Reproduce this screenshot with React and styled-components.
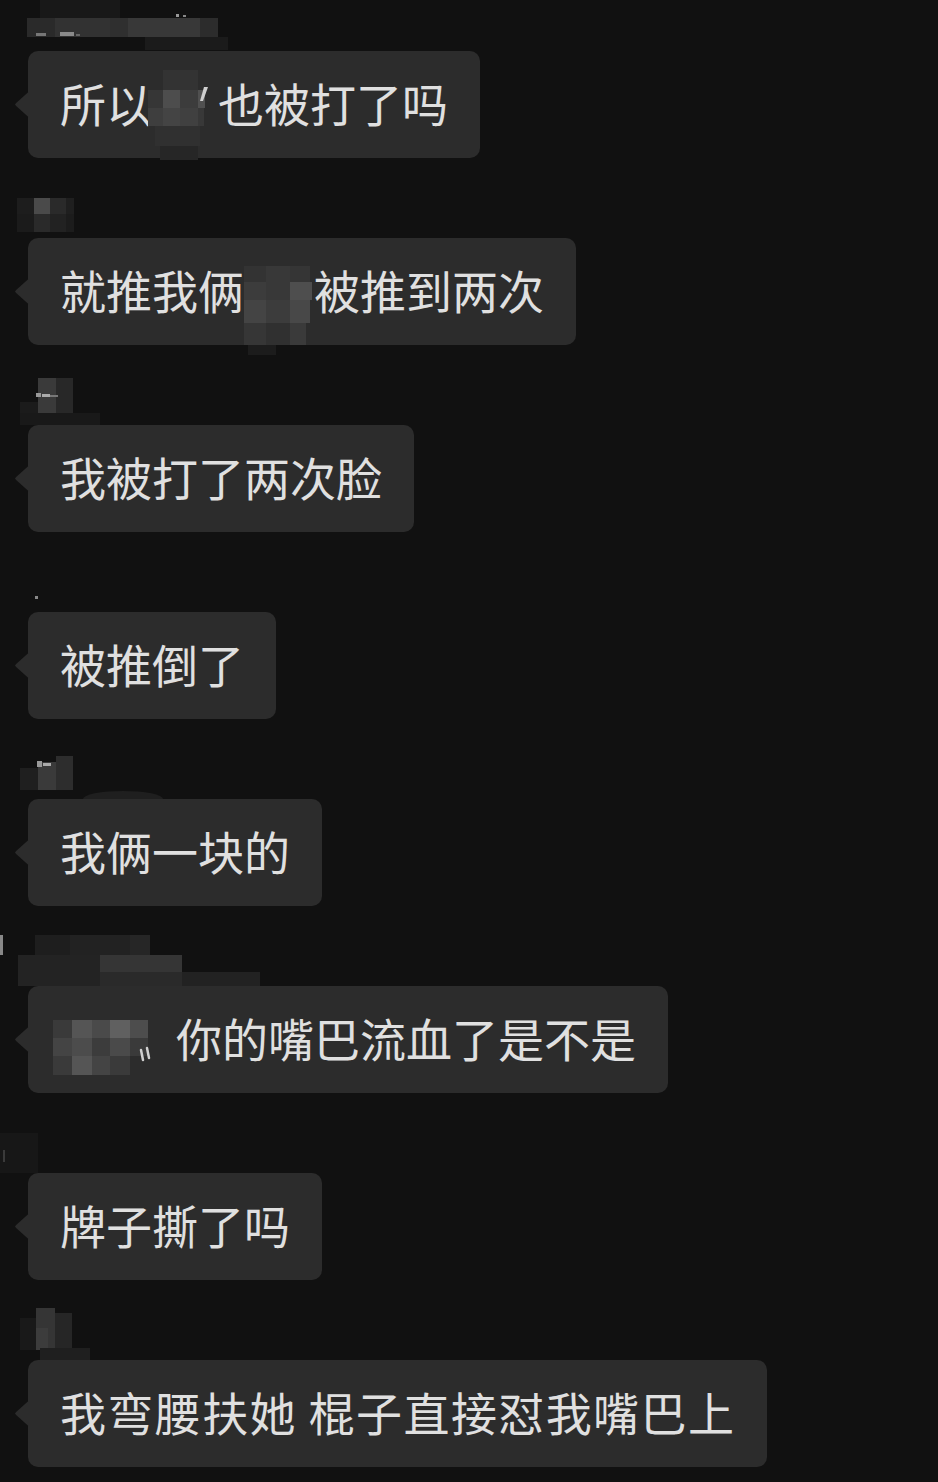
import React from "react";
import styled, { createGlobalStyle } from "styled-components";

const GlobalStyle = createGlobalStyle`
  html, body { margin: 0; padding: 0; background: #111111; }
  body { font-family: "Noto Sans CJK SC", "Noto Sans", sans-serif; }
`;

const Page = styled.div`
  width: 938px;
  min-height: 1482px;
  background: #111111;
  display: flex;
  flex-direction: column;
  padding-left: 28px;
  box-sizing: border-box;
  overflow: hidden;
`;

const Message = styled.div`
  display: flex;
  flex-direction: column;
  align-items: flex-start;
`;

const NameRow = styled.div`
  height: ${(p) => p.$h}px;
  width: 300px;
  margin-left: -28px;
  position: relative;
`;

const MosaicSvg = styled.svg`
  display: block;
  overflow: visible;
`;

const Bubble = styled.div`
  position: relative;
  display: flex;
  align-items: center;
  height: 107px;
  padding: 0 32px 5px;
  box-sizing: border-box;
  background: #2c2c2c;
  border-radius: 10px;
  color: #e0e0e0;
  font-size: 46px;
  line-height: 1;
  white-space: pre;
  letter-spacing: ${(p) => p.$letterSpacing || 0}px;
  word-spacing: ${(p) => p.$wordSpacing || 0}px;

  &::before {
    content: "";
    position: absolute;
    left: -13px;
    top: 50%;
    width: 14px;
    height: 26px;
    margin-top: -13px;
    background: #2c2c2c;
    clip-path: polygon(100% 0, 8% 44%, 0 50%, 8% 56%, 100% 100%);
  }
`;

const Text = styled.span`
  display: block;
`;

const Redacted = styled.span`
  position: relative;
  align-self: stretch;
  flex: none;
  width: ${(p) => p.$w}px;
  margin-left: ${(p) => p.$ml || 0}px;
  margin-bottom: -5px;
  z-index: 1;
`;

const RedactedSvg = styled.svg`
  position: absolute;
  left: 0;
  top: 0;
  overflow: visible;
`;

function Mosaic({ rects, extra, width = 300, height = 80 }) {
  return (
    <MosaicSvg width={width} height={height}>
      {rects.map(([x, y, w, h, c], i) => (
        <rect key={i} x={x} y={y} width={w} height={h} fill={c} />
      ))}
      {extra}
    </MosaicSvg>
  );
}

function InlineMosaic({ w, ml, rects, extra }) {
  return (
    <Redacted $w={w} $ml={ml}>
      <RedactedSvg width={w} height={107}>
        {rects.map(([x, y, rw, h, c], i) => (
          <rect key={i} x={x} y={y} width={rw} height={h} fill={c} />
        ))}
        {extra}
      </RedactedSvg>
    </Redacted>
  );
}

const label1 = [
  [40, 0, 80, 18, "#181818"],
  [27, 18, 28, 19, "#2a2a2a"],
  [55, 18, 55, 19, "#323232"],
  [110, 18, 18, 19, "#2f2f2f"],
  [128, 18, 72, 19, "#383838"],
  [200, 18, 18, 19, "#2c2c2c"],
  [145, 37, 83, 13, "#1b1b1b"],
  [36, 33, 10, 3, "#777777"],
  [60, 32, 14, 4, "#8a8a8a"],
  [76, 34, 4, 2, "#666666"],
  [176, 14, 3, 3, "#999999"],
  [183, 15, 3, 2, "#888888"],
];
const label2 = [
  [17, 40, 17, 16, "#1d1d1d"],
  [34, 40, 16, 16, "#4a4a4a"],
  [50, 40, 16, 16, "#2a2a2a"],
  [66, 40, 8, 16, "#1f1f1f"],
  [17, 56, 17, 18, "#1b1b1b"],
  [34, 56, 16, 18, "#2a2a2a"],
  [50, 56, 16, 18, "#222222"],
  [66, 56, 8, 18, "#1c1c1c"],
];
const label3 = [
  [20, 57, 18, 23, "#1b1b1b"],
  [20, 68, 80, 12, "#191919"],
  [38, 33, 18, 35, "#3a3a3a"],
  [56, 33, 17, 35, "#282828"],
  [36, 48, 5, 4, "#999999"],
  [42, 49, 8, 3, "#aaaaaa"],
  [50, 50, 8, 2, "#777777"],
];
const label4 = [[35, 64, 3, 3, "#888888"]];
const label5 = [
  [20, 49, 18, 22, "#1f1f1f"],
  [38, 43, 18, 28, "#3a3a3a"],
  [56, 37, 17, 34, "#2d2d2d"],
  [37, 42, 5, 6, "#999999"],
  [43, 44, 8, 3, "#aaaaaa"],
];
const label6 = [
  [0, 29, 3, 20, "#888888"],
  [35, 29, 35, 20, "#1e1e1e"],
  [70, 29, 60, 20, "#222222"],
  [130, 29, 20, 20, "#262626"],
  [18, 49, 82, 31, "#232323"],
  [100, 49, 82, 17, "#353535"],
  [100, 66, 82, 14, "#2a2a2a"],
  [182, 66, 78, 14, "#222222"],
];
const label7 = [
  [0, 40, 38, 40, "#171717"],
  [3, 57, 2, 12, "#3a3a3a"],
];
const label8 = [
  [20, 38, 16, 32, "#191919"],
  [36, 28, 19, 42, "#353535"],
  [36, 48, 12, 22, "#3c3c3c"],
  [55, 33, 17, 37, "#262626"],
  [40, 68, 50, 12, "#1f1f1f"],
];

const inline1 = [
  [11, 19, 35, 20, "#333333"],
  [-4, 39, 15, 18, "#363636"],
  [11, 39, 17, 18, "#4d4d4d"],
  [28, 39, 18, 18, "#3c3c3c"],
  [46, 39, 7, 18, "#505050"],
  [-4, 57, 15, 18, "#3e3e3e"],
  [11, 57, 17, 18, "#444444"],
  [28, 57, 18, 18, "#404040"],
  [46, 57, 6, 18, "#383838"],
  [3, 75, 45, 20, "#303030"],
  [8, 95, 38, 14, "#262626"],
];
const inline2 = [
  [0, 28, 22, 16, "#333333"],
  [22, 28, 24, 16, "#383838"],
  [46, 28, 20, 16, "#353535"],
  [0, 44, 22, 18, "#3c3c3c"],
  [22, 44, 24, 18, "#383838"],
  [46, 44, 22, 18, "#4e4e4e"],
  [0, 62, 22, 23, "#444444"],
  [22, 62, 24, 23, "#3c3c3c"],
  [46, 62, 20, 23, "#484848"],
  [0, 85, 22, 22, "#363636"],
  [22, 85, 24, 22, "#303030"],
  [46, 85, 16, 22, "#3a3a3a"],
  [4, 107, 28, 10, "#1c1c1c"],
];
const inline6 = [
  [0, 34, 19, 18, "#3a3a3a"],
  [19, 34, 20, 18, "#555555"],
  [39, 34, 18, 18, "#4a4a4a"],
  [57, 34, 20, 18, "#606060"],
  [77, 34, 18, 18, "#4d4d4d"],
  [0, 52, 19, 18, "#444444"],
  [19, 52, 20, 18, "#4c4c4c"],
  [39, 52, 18, 18, "#3c3c3c"],
  [57, 52, 20, 18, "#4a4a4a"],
  [77, 52, 18, 18, "#3a3a3a"],
  [0, 70, 19, 19, "#3a3a3a"],
  [19, 70, 20, 19, "#555555"],
  [39, 70, 18, 19, "#444444"],
  [57, 70, 20, 19, "#3a3a3a"],
];

export default function App() {
  return (
    <>
      <GlobalStyle />
      <Page>
        <Message>
          <NameRow $h={51}>
            <Mosaic rects={label1} height={51} />
          </NameRow>
          <Bubble>
            <Text>所以</Text>
            <InlineMosaic
              w={66}
              rects={inline1}
              extra={<polygon points="52,36 56,36 51,50 48,50" fill="#cfcfcf" />}
            />
            <Text>也被打了吗</Text>
          </Bubble>
        </Message>

        <Message>
          <NameRow $h={80}>
            <Mosaic rects={label2} />
          </NameRow>
          <Bubble>
            <Text>就推我俩</Text>
            <InlineMosaic w={70} rects={inline2} />
            <Text>被推到两次</Text>
          </Bubble>
        </Message>

        <Message>
          <NameRow $h={80}>
            <Mosaic rects={label3} />
          </NameRow>
          <Bubble>
            <Text>我被打了两次脸</Text>
          </Bubble>
        </Message>

        <Message>
          <NameRow $h={80}>
            <Mosaic rects={label4} />
          </NameRow>
          <Bubble>
            <Text>被推倒了</Text>
          </Bubble>
        </Message>

        <Message>
          <NameRow $h={80}>
            <Mosaic
              rects={label5}
              extra={<ellipse cx={123} cy={80} rx={40} ry={8} fill="#1f1f1f" />}
            />
          </NameRow>
          <Bubble>
            <Text>我俩一块的</Text>
          </Bubble>
        </Message>

        <Message>
          <NameRow $h={80}>
            <Mosaic rects={label6} />
          </NameRow>
          <Bubble>
            <InlineMosaic
              w={123}
              ml={-7}
              rects={inline6}
              extra={
                <g stroke="#cfcfcf" strokeWidth="2.5" strokeLinecap="round">
                  <line x1="88" y1="64" x2="90" y2="74" />
                  <line x1="94" y1="62" x2="96" y2="72" />
                </g>
              }
            />
            <Text>你的嘴巴流血了是不是</Text>
          </Bubble>
        </Message>

        <Message>
          <NameRow $h={80}>
            <Mosaic rects={label7} />
          </NameRow>
          <Bubble>
            <Text>牌子撕了吗</Text>
          </Bubble>
        </Message>

        <Message>
          <NameRow $h={80}>
            <Mosaic rects={label8} />
          </NameRow>
          <Bubble $letterSpacing={1.4} $wordSpacing={0}>
            <Text>我弯腰扶她 棍子直接怼我嘴巴上</Text>
          </Bubble>
        </Message>
      </Page>
    </>
  );
}
